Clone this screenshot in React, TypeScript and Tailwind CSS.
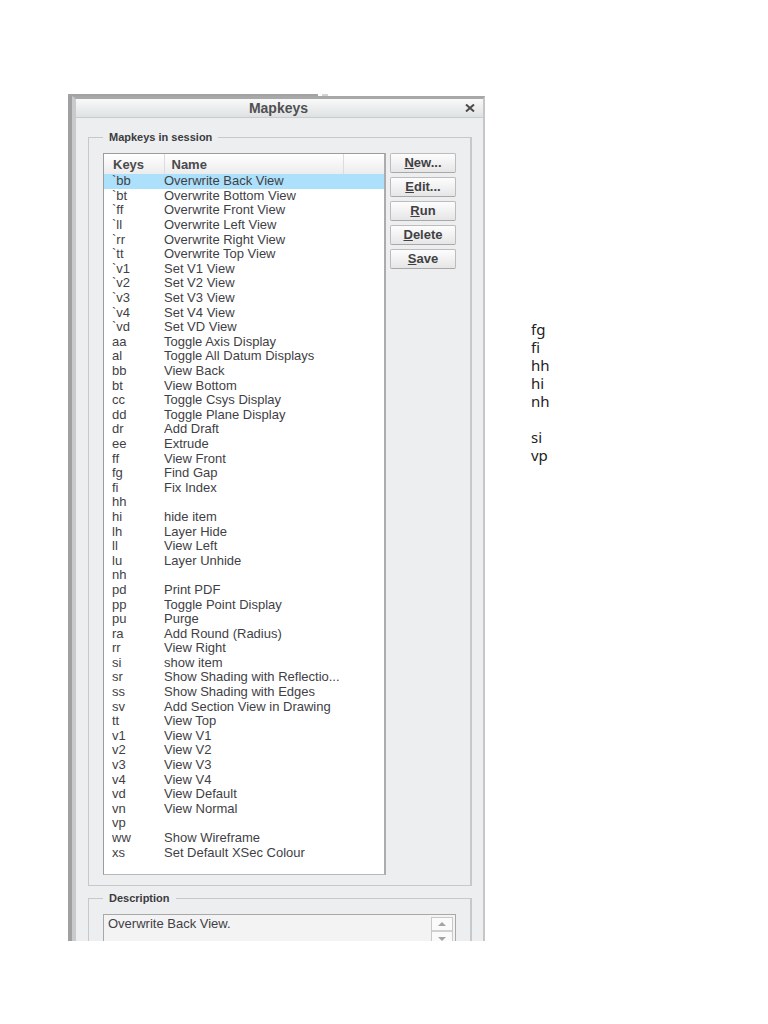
import React from 'react';
import { clsx } from 'clsx';

type Mapkey = { keys: string; name: string };

const mapkeys: Mapkey[] = [
  { keys: '`bb', name: 'Overwrite Back View' },
  { keys: '`bt', name: 'Overwrite Bottom View' },
  { keys: '`ff', name: 'Overwrite Front View' },
  { keys: '`ll', name: 'Overwrite Left View' },
  { keys: '`rr', name: 'Overwrite Right View' },
  { keys: '`tt', name: 'Overwrite Top View' },
  { keys: '`v1', name: 'Set V1 View' },
  { keys: '`v2', name: 'Set V2 View' },
  { keys: '`v3', name: 'Set V3 View' },
  { keys: '`v4', name: 'Set V4 View' },
  { keys: '`vd', name: 'Set VD View' },
  { keys: 'aa', name: 'Toggle Axis Display' },
  { keys: 'al', name: 'Toggle All Datum Displays' },
  { keys: 'bb', name: 'View Back' },
  { keys: 'bt', name: 'View Bottom' },
  { keys: 'cc', name: 'Toggle Csys Display' },
  { keys: 'dd', name: 'Toggle Plane Display' },
  { keys: 'dr', name: 'Add Draft' },
  { keys: 'ee', name: 'Extrude' },
  { keys: 'ff', name: 'View Front' },
  { keys: 'fg', name: 'Find Gap' },
  { keys: 'fi', name: 'Fix Index' },
  { keys: 'hh', name: '' },
  { keys: 'hi', name: 'hide item' },
  { keys: 'lh', name: 'Layer Hide' },
  { keys: 'll', name: 'View Left' },
  { keys: 'lu', name: 'Layer Unhide' },
  { keys: 'nh', name: '' },
  { keys: 'pd', name: 'Print PDF' },
  { keys: 'pp', name: 'Toggle Point Display' },
  { keys: 'pu', name: 'Purge' },
  { keys: 'ra', name: 'Add Round (Radius)' },
  { keys: 'rr', name: 'View Right' },
  { keys: 'si', name: 'show item' },
  { keys: 'sr', name: 'Show Shading with Reflectio...' },
  { keys: 'ss', name: 'Show Shading with Edges' },
  { keys: 'sv', name: 'Add Section View in Drawing' },
  { keys: 'tt', name: 'View Top' },
  { keys: 'v1', name: 'View V1' },
  { keys: 'v2', name: 'View V2' },
  { keys: 'v3', name: 'View V3' },
  { keys: 'v4', name: 'View V4' },
  { keys: 'vd', name: 'View Default' },
  { keys: 'vn', name: 'View Normal' },
  { keys: 'vp', name: '' },
  { keys: 'ww', name: 'Show Wireframe' },
  { keys: 'xs', name: 'Set Default XSec Colour' },
];

const actions = ['New...', 'Edit...', 'Run', 'Delete', 'Save'];

const notes = ['fg', 'fi', 'hh', 'hi', 'nh', '', 'si', 'vp'];

export default function App() {
  return (
    <main className="min-h-screen bg-white flex items-start pt-[94px] pl-[68px] gap-[46px]">
      <div className="flex-1 min-w-0">
        <div className="flex gap-1 h-[2px]">
          <div className="w-3/5 bg-[#a3a3a3]" />
          <div className="w-[6px] bg-[#d4d4d4]" />
        </div>
        <MapkeysDialog />
      </div>
      <ul className="w-[237px] pt-[226px] font-['Noto_Sans',sans-serif] text-[15px] leading-[18px] text-[#222]">
        {notes.map((note, i) => (
          <li key={i} className="h-[18px]">{note}</li>
        ))}
      </ul>
    </main>
  );
}

function MapkeysDialog() {
  return (
    <section
      aria-label="Mapkeys"
      className="border-l-4 border-[#a0a0a0] font-['Liberation_Sans',Arial,sans-serif] text-[13px] text-[#3f3f46]"
    >
      <div className="border-t-3 border-r-2 border-l-4 border-t-[#a8a8a8] border-r-[#c6c6c6] border-l-[#c8cacb] bg-[#edeef0]">
        <header className="flex items-center h-[19px] pr-2 pl-4 border-b border-[#c9cccd] bg-linear-to-b from-[#f8f9f9] to-[#dfe2e3]">
          <h1 className="flex-1 text-center text-sm leading-4 font-bold text-[#505052]">Mapkeys</h1>
          <button type="button" aria-label="Close">
            <svg width="10" height="8" viewBox="0 0 10 8" fill="none" stroke="#4b4b4b" strokeWidth="2">
              <path d="M1 .5 9 7.5M9 .5 1 7.5" />
            </svg>
          </button>
        </header>

        <div className="pl-3 pr-[11px]">
          <Group title="Mapkeys in session" className="mt-[13px] pb-[10px]">
            <div className="flex items-start gap-1">
              <MapkeyTable />
              <div className="flex flex-col gap-1 w-[66px]">
                {actions.map((action) => (
                  <ActionButton key={action} label={action} />
                ))}
              </div>
            </div>
          </Group>

          {/* the window is cut off partway through the description */}
          <div className="h-[49px] mt-[6px] overflow-hidden">
            <Group title="Description">
              <DescriptionBox />
            </Group>
          </div>
        </div>
      </div>
    </section>
  );
}

function Group({ title, className, children }: { title: string, className?: string, children: React.ReactNode }) {
  return (
    <fieldset className={clsx('min-w-0 pl-[14px] pr-[14px] border border-r-2 border-[#c6c8ca]', className)}>
      <legend className="px-[6px] text-[11px] leading-[12px] font-bold text-[#3c3c40]">{title}</legend>
      <div className="pt-[10px]">{children}</div>
    </fieldset>
  );
}

function MapkeyTable() {
  return (
    <div className="flex-1 min-w-0 h-[722px] border border-t-[#9c9c9c] border-l-[#9c9c9c] border-r-2 border-r-[#acacac] border-b-[#b8b8b8] bg-white">
      <table className="w-full table-fixed border-collapse text-left leading-[14px]">
        <colgroup>
          <col className="w-[60px]" />
          <col />
          <col className="w-[41px]" />
        </colgroup>
        <thead className="bg-linear-to-b from-white to-[#ececec] text-[#4a4a4c]">
          <tr className="h-5">
            <th className="p-0 pl-[9px] pt-[2px] border-r border-[#dcdcdc]">Keys</th>
            <th className="p-0 pl-[7px] pt-[2px] border-r border-[#dcdcdc]">Name</th>
            <th className="p-0"></th>
          </tr>
        </thead>
        <tbody className="h-[686px]">
          {mapkeys.map((mapkey, i) => (
            <tr key={i} className={clsx(i === 0 && 'bg-[#ade0fa]')}>
              <td className="p-0 pl-2">{mapkey.keys}</td>
              <td className="p-0 whitespace-nowrap">{mapkey.name}</td>
              <td className="p-0"></td>
            </tr>
          ))}
        </tbody>
      </table>
    </div>
  );
}

function ActionButton({ label }: { label: string }) {
  return (
    <button
      type="button"
      className="h-5 rounded-xs border border-[#bcbcbc] border-b-[#a8a8a8] bg-linear-to-b from-[#fdfdfd] to-[#e6e6e6] font-bold leading-[16px] text-[#414143]"
    >
      <span className="underline">{label[0]}</span>
      {label.slice(1)}
    </button>
  );
}

function DescriptionBox() {
  return (
    <div className="flex h-12 border border-[#a8a8a8] bg-[#f3f3f3]">
      <textarea
        readOnly
        aria-label="Description"
        className="flex-1 min-w-0 pl-1 pt-[2px] resize-none overflow-hidden leading-[14px] outline-none"
        value="Overwrite Back View."
      />
      <div className="flex flex-col w-[22px] mr-[2px] mt-[2px] border border-[#c8c8c8] bg-[#fafafa]">
        <button type="button" aria-label="Scroll up" className="flex items-center justify-center h-[14px] border-b-2 border-[#d0d0d0]">
          <svg width="8" height="4" viewBox="0 0 8 4"><path d="M0 4 4 0l4 4z" fill="#a3a3a3" /></svg>
        </button>
        <button type="button" aria-label="Scroll down" className="flex items-center justify-center h-[13px]">
          <svg width="8" height="4" viewBox="0 0 8 4"><path d="M0 0h8L4 4z" fill="#a3a3a3" /></svg>
        </button>
      </div>
    </div>
  );
}
